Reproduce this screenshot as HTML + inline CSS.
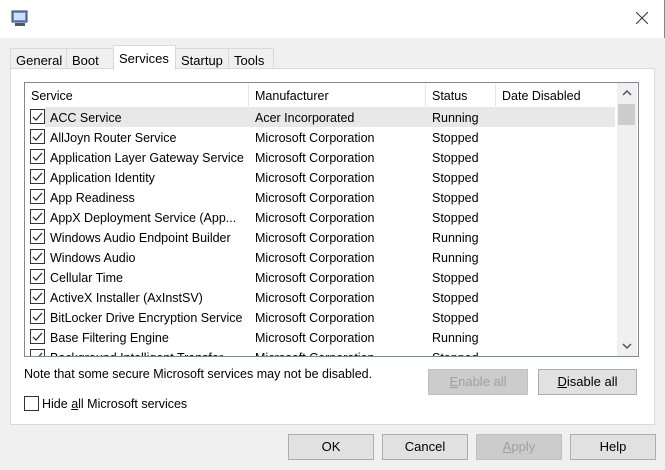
<!DOCTYPE html><html><head><style>
*{margin:0;padding:0;box-sizing:border-box}
body{width:665px;height:470px;background:#f0f0f0;font-family:"Liberation Sans",sans-serif;font-size:12.5px;color:#000;position:relative;overflow:hidden}
.a{position:absolute}
.title{left:0;top:0;width:665px;height:38px;background:#fff;border-right:1px solid #888}
.tab{top:48px;height:21px;background:#f0f0f0;border:1px solid #d9d9d9;border-bottom:none;padding:4px 5px 0;font-size:13px}
.panel{left:10px;top:68px;width:645px;height:357px;background:#fff;border:1px solid #d9d9d9}
.list{left:24px;top:82px;width:615px;height:275px;border:1px solid #828790;background:#fff;overflow:hidden}
.hdr{height:24px;border-bottom:1px solid #fff}
.hdr span{position:absolute;top:6px}
.row{position:absolute;left:0;height:20px;width:592px}
.row span{position:absolute;top:4px;white-space:nowrap}
.cb{position:absolute;left:5px;top:2px;width:15px;height:15px;border:1px solid #333;background:#fff}
.cb svg{position:absolute;left:1px;top:1px}
.btn{height:26px;border:1px solid #adadad;background:#e1e1e1;text-align:center;line-height:24px;font-size:13px}
.dis{color:#a0a0a0;background:#ccc;border-color:#bfbfbf}
.sep{position:absolute;top:84px;width:1px;height:22px;background:#e5e5e5}
</style></head><body>
<div class="a title"><svg class="a" style="left:11px;top:10px" width="18" height="17"><rect x="1" y="1" width="15" height="11" fill="#6b8fd6" stroke="#345" /><rect x="3" y="3" width="11" height="7" fill="#cfe0ff"/><rect x="4" y="13" width="10" height="3" fill="#555"/></svg>
<svg class="a" style="left:636px;top:12px" width="12" height="12"><path d="M0 0L12 12M12 0L0 12" stroke="#333" stroke-width="1"/></svg></div>
<div class="a tab" style="left:10px;width:57px">General</div>
<div class="a tab" style="left:66px;width:48px">Boot</div>
<div class="a tab" style="left:175px;width:54px">Startup</div>
<div class="a tab" style="left:228px;width:46px">Tools</div>
<div class="a panel"></div>
<div class="a tab" style="left:113px;top:45px;height:25px;width:63px;background:#fff;z-index:2;padding-top:5px">Services</div>
<div class="a list">
<div class="hdr"><span style="left:6px">Service</span><span style="left:230px">Manufacturer</span><span style="left:407px">Status</span><span style="left:477px">Date Disabled</span></div>
</div>
<div class="sep" style="left:248px"></div><div class="sep" style="left:425px"></div><div class="sep" style="left:495px"></div>
<div class="a" style="left:617px;top:83px;width:20px;height:273px;background:#f0f0f0">
<svg class="a" style="left:5px;top:6px" width="10" height="7"><path d="M1 6L5 2L9 6" stroke="#555" fill="none" stroke-width="1.5"/></svg>
<div class="a" style="left:1px;top:21px;width:17px;height:21px;background:#cdcdcd"></div>
<svg class="a" style="left:5px;top:260px" width="10" height="7"><path d="M1 1L5 5L9 1" stroke="#555" fill="none" stroke-width="1.5"/></svg></div>
<div class="a" style="left:25px;top:107px;width:592px;height:249px;overflow:hidden">
<div class="row" style="top:0;background:#e8e8e8;left:20px;width:570px"></div>
<div class="row" style="top:0"><div class="cb"><svg width="11" height="11"><path d="M1 6L4 9L10 2" stroke="#222" fill="none" stroke-width="1.2"/></svg></div><span style="left:25px">ACC Service</span><span style="left:230px">Acer Incorporated</span><span style="left:407px">Running</span></div>
<div class="row" style="top:20px"><div class="cb"><svg width="11" height="11"><path d="M1 6L4 9L10 2" stroke="#222" fill="none" stroke-width="1.2"/></svg></div><span style="left:25px">AllJoyn Router Service</span><span style="left:230px">Microsoft Corporation</span><span style="left:407px">Stopped</span></div>
<div class="row" style="top:40px"><div class="cb"><svg width="11" height="11"><path d="M1 6L4 9L10 2" stroke="#222" fill="none" stroke-width="1.2"/></svg></div><span style="left:25px">Application Layer Gateway Service</span><span style="left:230px">Microsoft Corporation</span><span style="left:407px">Stopped</span></div>
<div class="row" style="top:60px"><div class="cb"><svg width="11" height="11"><path d="M1 6L4 9L10 2" stroke="#222" fill="none" stroke-width="1.2"/></svg></div><span style="left:25px">Application Identity</span><span style="left:230px">Microsoft Corporation</span><span style="left:407px">Stopped</span></div>
<div class="row" style="top:80px"><div class="cb"><svg width="11" height="11"><path d="M1 6L4 9L10 2" stroke="#222" fill="none" stroke-width="1.2"/></svg></div><span style="left:25px">App Readiness</span><span style="left:230px">Microsoft Corporation</span><span style="left:407px">Stopped</span></div>
<div class="row" style="top:100px"><div class="cb"><svg width="11" height="11"><path d="M1 6L4 9L10 2" stroke="#222" fill="none" stroke-width="1.2"/></svg></div><span style="left:25px">AppX Deployment Service (App...</span><span style="left:230px">Microsoft Corporation</span><span style="left:407px">Stopped</span></div>
<div class="row" style="top:120px"><div class="cb"><svg width="11" height="11"><path d="M1 6L4 9L10 2" stroke="#222" fill="none" stroke-width="1.2"/></svg></div><span style="left:25px">Windows Audio Endpoint Builder</span><span style="left:230px">Microsoft Corporation</span><span style="left:407px">Running</span></div>
<div class="row" style="top:140px"><div class="cb"><svg width="11" height="11"><path d="M1 6L4 9L10 2" stroke="#222" fill="none" stroke-width="1.2"/></svg></div><span style="left:25px">Windows Audio</span><span style="left:230px">Microsoft Corporation</span><span style="left:407px">Running</span></div>
<div class="row" style="top:160px"><div class="cb"><svg width="11" height="11"><path d="M1 6L4 9L10 2" stroke="#222" fill="none" stroke-width="1.2"/></svg></div><span style="left:25px">Cellular Time</span><span style="left:230px">Microsoft Corporation</span><span style="left:407px">Stopped</span></div>
<div class="row" style="top:180px"><div class="cb"><svg width="11" height="11"><path d="M1 6L4 9L10 2" stroke="#222" fill="none" stroke-width="1.2"/></svg></div><span style="left:25px">ActiveX Installer (AxInstSV)</span><span style="left:230px">Microsoft Corporation</span><span style="left:407px">Stopped</span></div>
<div class="row" style="top:200px"><div class="cb"><svg width="11" height="11"><path d="M1 6L4 9L10 2" stroke="#222" fill="none" stroke-width="1.2"/></svg></div><span style="left:25px">BitLocker Drive Encryption Service</span><span style="left:230px">Microsoft Corporation</span><span style="left:407px">Stopped</span></div>
<div class="row" style="top:220px"><div class="cb"><svg width="11" height="11"><path d="M1 6L4 9L10 2" stroke="#222" fill="none" stroke-width="1.2"/></svg></div><span style="left:25px">Base Filtering Engine</span><span style="left:230px">Microsoft Corporation</span><span style="left:407px">Running</span></div>
<div class="row" style="top:240px"><div class="cb"><svg width="11" height="11"><path d="M1 6L4 9L10 2" stroke="#222" fill="none" stroke-width="1.2"/></svg></div><span style="left:25px">Background Intelligent Transfer</span><span style="left:230px">Microsoft Corporation</span><span style="left:407px">Stopped</span></div>
</div>
<div class="a" style="left:24px;top:367px">Note that some secure Microsoft services may not be disabled.</div>
<div class="a btn dis" style="left:428px;top:369px;width:100px"><u>E</u>nable all</div>
<div class="a btn" style="left:538px;top:369px;width:99px"><u>D</u>isable all</div>
<div class="a" style="left:24px;top:396px;width:15px;height:15px;border:1px solid #333;background:#fff"></div>
<div class="a" style="left:42px;top:397px">Hide <u>a</u>ll Microsoft services</div>
<div class="a btn" style="left:288px;top:434px;width:86px">OK</div>
<div class="a btn" style="left:382px;top:434px;width:86px">Cancel</div>
<div class="a btn dis" style="left:476px;top:434px;width:86px"><u>A</u>pply</div>
<div class="a btn" style="left:570px;top:434px;width:86px">Help</div>
</body></html>
